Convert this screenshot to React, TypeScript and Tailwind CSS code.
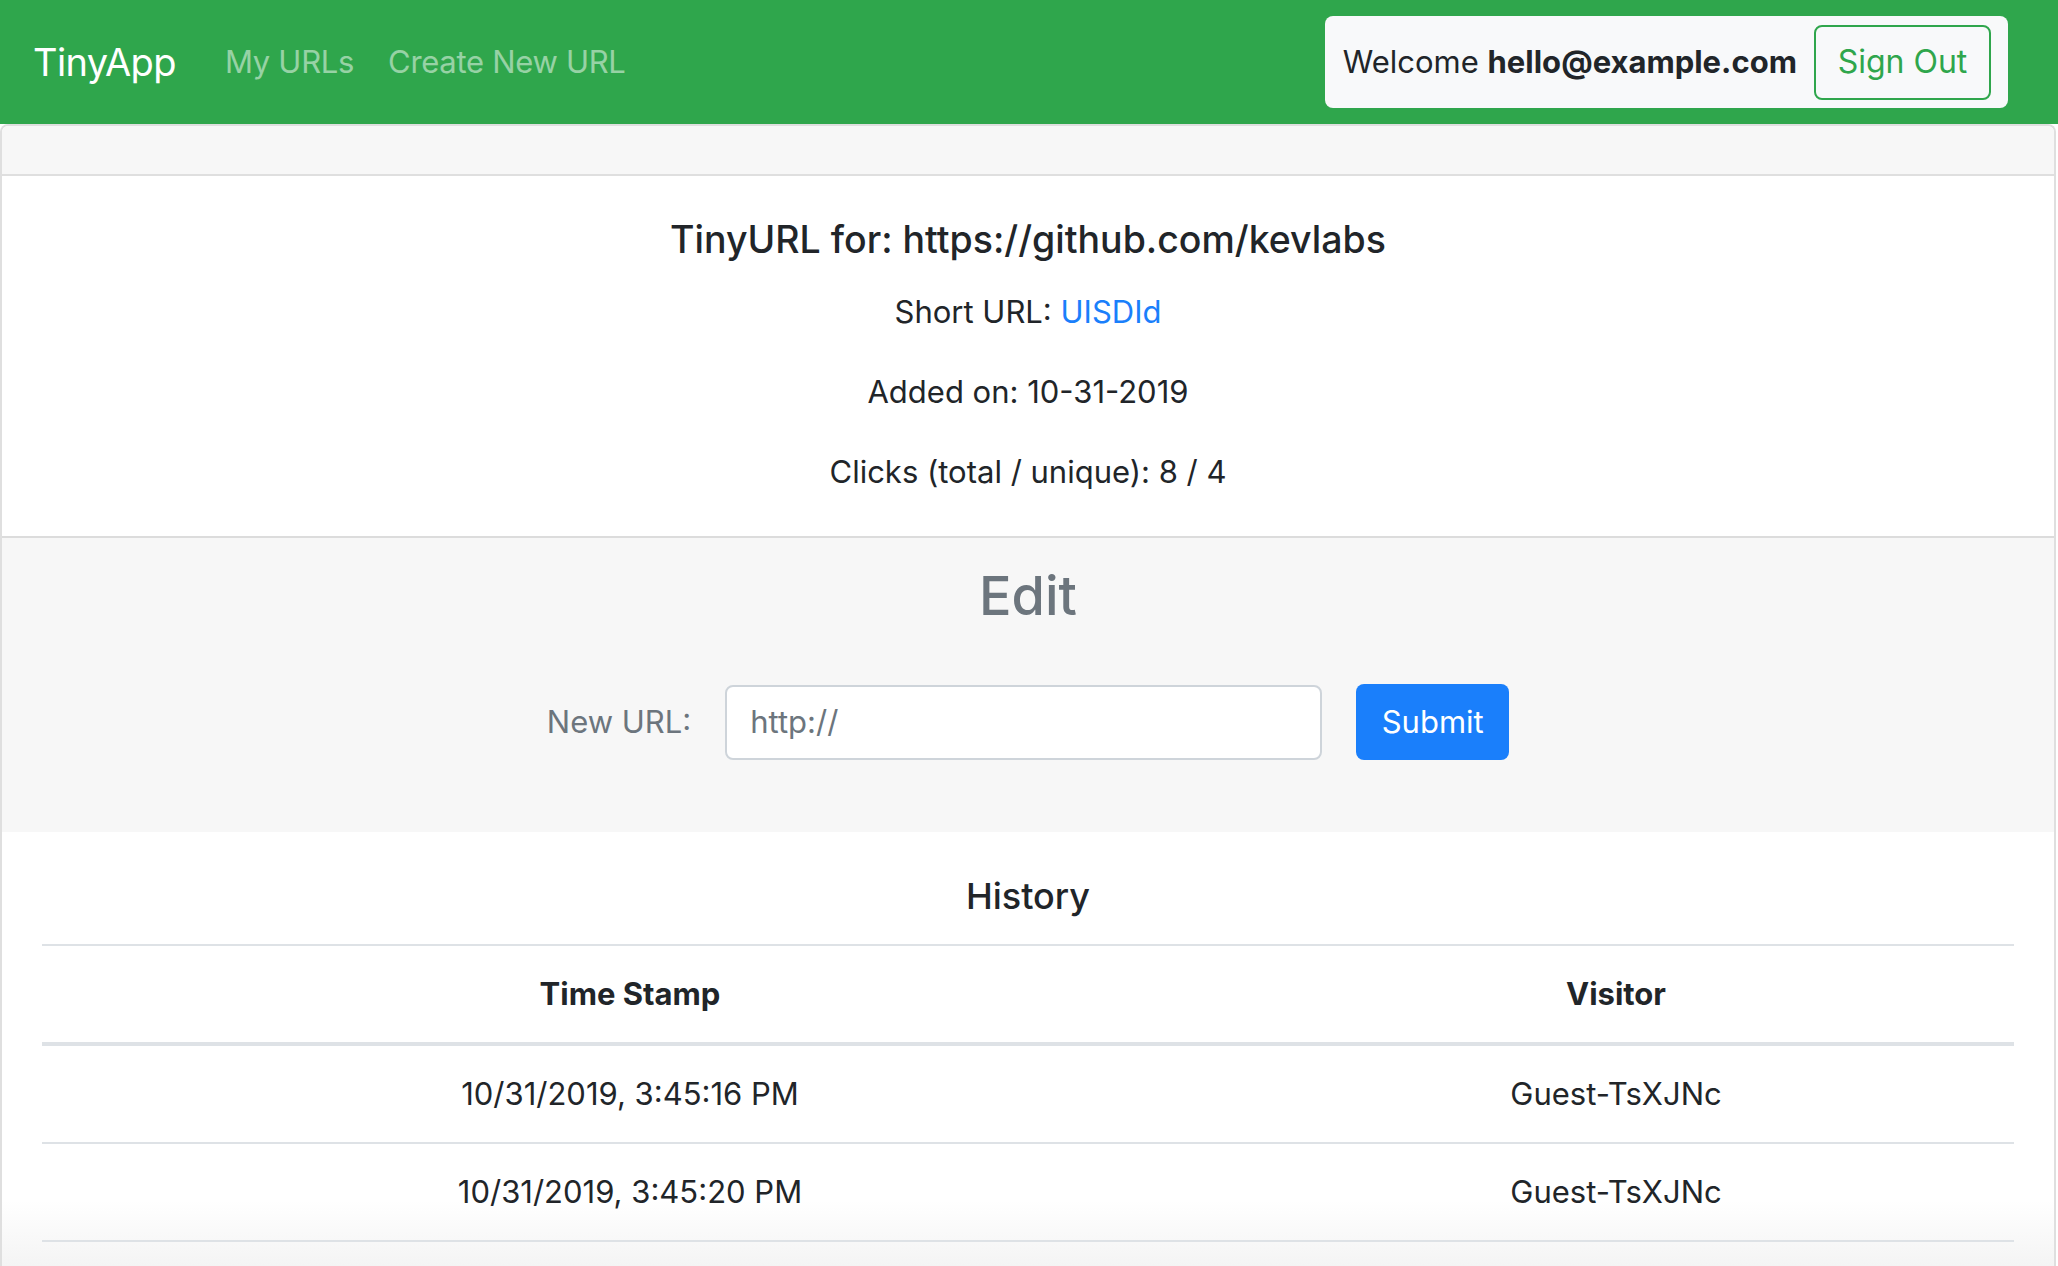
import React from "react";

const rows = [
  { ts: "10/31/2019, 3:45:16 PM", visitor: "Guest-TsXJNc" },
  { ts: "10/31/2019, 3:45:20 PM", visitor: "Guest-TsXJNc" },
];

export default function App() {
  return (
    <div className="min-h-screen bg-white font-['Inter',sans-serif] text-[#212529]">
      <nav className="h-[124px] bg-[#2fa64c] flex items-center pl-[33px] pr-[50px]">
        <span className="text-[38px] tracking-[-0.6px] leading-[48px] text-white mr-[49px]">TinyApp</span>
        <span className="text-[31px] tracking-[-0.3px] leading-[48px] text-white/50 mr-[34px]">My URLs</span>
        <span className="text-[31px] tracking-[-0.3px] leading-[48px] text-white/50">Create New URL</span>
        <div className="ml-auto h-[92px] rounded-[8px] bg-[#f8f9fa] flex items-center pl-[18px] pr-[17px]">
          <span className="text-[31px] leading-[48px] text-[#212529]">
            Welcome <b className="font-bold">hello@example.com</b>
          </span>
          <button className="ml-[17px] h-[75px] w-[177px] rounded-[8px] border-2 border-[#2fa64c] text-[#2fa64c] text-[32px] leading-[48px]">
            Sign Out
          </button>
        </div>
      </nav>

      <div className="mr-[2px] border-2 border-b-0 border-[#dfdfdf] rounded-t-[8px] overflow-hidden">
        <div className="h-[50px] bg-[#f7f7f7] border-b-2 border-[#dfdfdf]" />
        <div className="pt-[42px] pb-[40px] text-center border-b-2 border-[#dcdcdc]">
          <h4 className="text-[37.5px] leading-[44px] font-medium mb-[26px]">
            TinyURL for: https://github.com/kevlabs
          </h4>
          <p className="text-[31px] leading-[48px] mb-[32px]">
            Short URL: <a className="text-[#1a7ffb]">UISDId</a>
          </p>
          <p className="text-[31px] leading-[48px] mb-[32px]">Added on: 10-31-2019</p>
          <p className="text-[31px] leading-[48px]">Clicks (total / unique): 8 / 4</p>
        </div>

        <div className="h-[294px] bg-[#f7f7f7] pt-[26px] flex flex-col items-center">
          <h2 className="text-[54px] leading-[64px] font-medium text-[#6c757d]">Edit</h2>
          <div className="mt-[56px] flex items-center gap-[34px]">
            <label className="text-[31px] leading-[48px] text-[#6c757d]">New URL:</label>
            <div className="w-[597px] h-[75px] bg-white border-2 border-[#ced4da] rounded-[8px] flex items-center pl-[23px] text-[31px] text-[#6c757d]">
              http://
            </div>
            <button className="w-[153px] h-[76px] rounded-[8px] bg-[#1a7ffb] text-white text-[31px]">
              Submit
            </button>
          </div>
        </div>

        <div className="pt-[42px] pb-[24px] bg-linear-to-b from-white from-85% to-[#f4f4f4]">
          <h4 className="text-center text-[36px] leading-[44px] font-medium mb-[26px]">History</h4>
          <div className="mx-[40px] border-t-2 border-[#dee2e6]">
            <div className="grid grid-cols-[1176px_1fr] border-b-4 border-[#dee2e6]">
              <div className="h-[96px] flex items-center justify-center text-[31px] font-bold">Time Stamp</div>
              <div className="h-[96px] flex items-center justify-center text-[31px] font-bold">Visitor</div>
            </div>
            {rows.map((r, i) => (
              <div key={i} className="grid grid-cols-[1176px_1fr] border-b-2 border-[#dee2e6]">
                <div className="h-[96px] flex items-center justify-center text-[31px]">{r.ts}</div>
                <div className="h-[96px] flex items-center justify-center text-[31px]">{r.visitor}</div>
              </div>
            ))}
          </div>
        </div>
      </div>
    </div>
  );
}
